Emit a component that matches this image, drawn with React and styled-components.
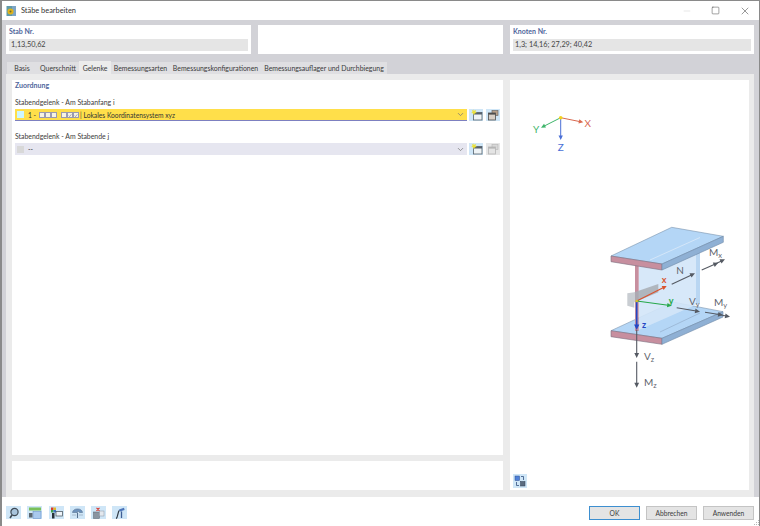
import React from 'react';
import styled, { createGlobalStyle } from 'styled-components';
import { Minus, Square, X, ChevronDown } from 'lucide-react';

const GlobalStyle = createGlobalStyle`
  html, body { margin: 0; padding: 0; background: #fff; }
  body { font-family: Lato, 'Open Sans', sans-serif; font-size: 7px; color: #3c3c3c; }
`;

const Window = styled.div`
  width: 760px;
  height: 526px;
  box-sizing: border-box;
  border: 1px solid #8a8a8a;
  border-bottom: 0;
  border-left-width: 2px;
  display: flex;
  flex-direction: column;
  overflow: hidden;
  position: relative;
`;

const TitleBar = styled.header`
  height: 19px;
  display: flex;
  align-items: center;
  padding-left: 4px;
  background: #fff;
`;

const TitleText = styled.span`
  margin-left: 4px;
  font-size: 7.4px;
  color: #333;
`;

const WindowButtons = styled.div`
  margin-left: auto;
  display: flex;
  color: #333;
`;

const WindowButton = styled.span`
  width: 29px;
  height: 19px;
  display: flex;
  align-items: center;
  justify-content: center;
  color: ${p => (p.$dim ? '#c4c4c4' : '#333')};
`;

const Body = styled.main`
  height: 477px;
  background: #d2d2d7;
  padding: 5px 5px 0 4px;
  box-sizing: border-box;
  display: flex;
  flex-direction: column;
`;

const InfoRow = styled.section`
  display: grid;
  grid-template-columns: 245px 245px 244px;
  column-gap: 7px;
  height: 29px;
`;

const InfoCard = styled.div`
  background: #fff;
  padding: 1px 3px 0;
  box-sizing: border-box;
`;

const CardTitle = styled.div`
  color: #50669c;
  font-size: 7px;
  font-weight: 700;
  height: 11px;
  line-height: 11px;
`;

const ReadOnly = styled.div`
  margin-top: 2px;
  height: 12px;
  line-height: 12px;
  background: #e5e5e5;
  color: #444;
  font-size: 7.3px;
  padding-left: 2px;
`;

const TabBar = styled.nav`
  display: flex;
  margin-top: 8px;
  height: 12px;
  padding-left: 1px;
`;

const Tab = styled.div`
  height: ${p => (p.$active ? '14px' : '12px')};
  margin-top: ${p => (p.$active ? '-1px' : '0')};
  line-height: ${p => (p.$active ? '15px' : '13px')};
  background: ${p => (p.$active ? '#ececec' : '#dfdfe2')};
  width: ${p => p.$w}px;
  box-sizing: border-box;
  text-align: center;
  font-size: 6.9px;
  color: #3a3a3a;
  white-space: nowrap;
  position: relative;
`;

const TabPanel = styled.section`
  height: 423px;
  background: #ebebeb;
  padding: 6px 5px 7px 6px;
  box-sizing: border-box;
  display: grid;
  grid-template-columns: 491px 239px;
  column-gap: 7px;
`;

const LeftColumn = styled.div`
  display: flex;
  flex-direction: column;
  gap: 6px;
`;

const FormCard = styled.div`
  height: 375px;
  background: #fff;
  padding: 0 3px;
  box-sizing: border-box;
`;

const NoteCard = styled.div`
  height: 29px;
  background: #fff;
`;

const GroupTitle = styled.div`
  color: #50669c;
  font-size: 7px;
  font-weight: 700;
  height: 11px;
  line-height: 11px;
`;

const FieldLabel = styled.div`
  margin-top: ${p => p.$top}px;
  height: 11px;
  line-height: 11px;
  color: #3c3c3c;
  font-size: 6.9px;
`;

const FieldRow = styled.div`
  display: flex;
  align-items: center;
  margin-top: 1px;
  height: 12px;
`;

const Select = styled.div`
  width: 452px;
  height: 12px;
  box-sizing: border-box;
  display: flex;
  align-items: center;
  padding-left: 2px;
  background: ${p => (p.$highlight ? '#ffdf4a' : '#e6e6f0')};
  border-bottom: ${p => (p.$highlight ? '1px solid #7d80c0' : '0')};
  font-size: 6.7px;
  color: #333;
`;

const Swatch = styled.span`
  width: 7px;
  height: 7px;
  margin-right: 4px;
  background: ${p => (p.$muted ? '#d8d8d8' : '#cdf6ff')};
`;

const Flag = styled.span`
  width: 6px;
  height: 6px;
  border: 0.6px solid #9a9ab0;
  box-sizing: border-box;
  background: #f6f3e2;
  display: flex;
`;

const Flags = styled.span`
  display: inline-flex;
  margin: ${p => (p.$first ? '0 4px 0 3px' : '0 1px 0 0')};
`;

const Caret = styled.span`
  margin-left: auto;
  margin-right: 2px;
  display: flex;
  color: #777;
`;

const SelectButton = styled.span`
  width: 14px;
  height: 12px;
  margin-left: ${p => p.$gap}px;
  background: ${p => (p.$off ? '#e6e6e6' : '#cfe6f7')};
  display: flex;
  align-items: center;
  justify-content: center;
`;

const ViewCard = styled.div`
  background: #fff;
  position: relative;
`;

const Scene = styled.svg`
  display: block;
  width: 239px;
  height: 410px;
`;

const ViewToggle = styled.span`
  position: absolute;
  left: 3px;
  bottom: 2px;
  width: 14px;
  height: 14px;
  background: #cfe6f7;
  display: flex;
  align-items: center;
  justify-content: center;
`;

const Footer = styled.footer`
  flex: 1;
  background: #fff;
  display: flex;
  align-items: flex-start;
  padding: 9px 0 0 4px;
`;

const Tool = styled.span`
  width: 15px;
  height: 13px;
  margin-right: 6.3px;
  background: #cfe6f7;
  display: flex;
  align-items: center;
  justify-content: center;
`;

const Actions = styled.div`
  margin-left: auto;
  margin-right: 5px;
  display: flex;
  gap: 6px;
`;

const Action = styled.button`
  width: 51px;
  height: 14px;
  padding: 0;
  margin: 0;
  box-sizing: border-box;
  background: #e4e4e4;
  border: ${p => (p.$primary ? '1px solid #3d8fd0' : '1px solid #c4c4c4')};
  font: 6.7px Lato, 'Open Sans', sans-serif;
  color: #3c3c3c;
`;

const Grip = styled.svg`
  position: absolute;
  right: 0;
  bottom: 1px;
  width: 6px;
  height: 6px;
`;

const tabs = [
  ['Basis', 30],
  ['Querschnitt', 42],
  ['Gelenke', 32],
  ['Bemessungsarten', 59],
  ['Bemessungskonfigurationen', 91],
  ['Bemessungsauflager und Durchbiegung', 126],
];

const AppIcon = () => (
  <svg width="11" height="12" viewBox="0 0 11 12">
    <rect x="0.5" y="1" width="9" height="10" fill="#5f9aa8" />
    <rect x="6" y="1" width="4" height="10" fill="#7ea5c4" />
    <circle cx="4.5" cy="6.5" r="3" fill="#e1b419" />
    <circle cx="4.5" cy="6.5" r="1" fill="#6d6a2a" />
  </svg>
);

const Check = () => (
  <svg width="5" height="5" viewBox="0 0 5 5">
    <path d="M0.8 2.6L2 3.8 4.2 1" fill="none" stroke="#6a6a84" strokeWidth="0.7" />
  </svg>
);

const NewIcon = () => (
  <svg width="13" height="12" viewBox="0 0 13 12">
    <rect x="3.5" y="3.5" width="8.5" height="7.5" fill="#eef3f6" stroke="#56616c" strokeWidth="0.8" />
    <rect x="3.5" y="3.5" width="8.5" height="2" fill="#56616c" />
    <path d="M3.5 0l.8 1.8L6.2 1 5.4 2.9 7 4 5 4.2 3.5 6 3 4.2 1 4l1.6-1.1L1.8 1l1.9.8z" fill="#ece23a" />
  </svg>
);

const CopyIcon = ({ off }) => (
  <svg width="12" height="11" viewBox="0 0 12 11">
    <rect x="5" y="0.5" width="6" height="5" fill={off ? '#d8d8d8' : '#b8a08a'} stroke={off ? '#bbb' : '#6a6a6a'} strokeWidth="0.7" />
    <rect x="1.5" y="3" width="7" height="7" fill={off ? '#e4e4e4' : '#d8cfc6'} stroke={off ? '#b5b5b5' : '#4d4d4d'} strokeWidth="0.8" />
    <rect x="1.5" y="3" width="7" height="1.6" fill={off ? '#b5b5b5' : '#4d4d4d'} />
  </svg>
);

const ToggleIcon = () => (
  <svg width="12" height="12" viewBox="0 0 12 12">
    <rect x="1" y="1" width="4.5" height="4.5" fill="#4f80d8" stroke="#2f4f90" strokeWidth="0.5" />
    <rect x="6.5" y="6.5" width="4.5" height="4.5" fill="#5c6c80" stroke="#2f3f55" strokeWidth="0.5" />
    <path d="M7 1.5h2.5V5M5 10.5H2.5V7" fill="none" stroke="#34507f" strokeWidth="0.8" />
  </svg>
);

const toolIcons = [
  <svg key="a" width="12" height="12" viewBox="0 0 12 12">
    <circle cx="6.5" cy="5" r="3.6" fill="#a8c4dc" stroke="#3f4a55" strokeWidth="1.2" />
    <path d="M4 8L2 11" stroke="#3f4a55" strokeWidth="1.6" />
  </svg>,
  <svg key="b" width="14" height="12" viewBox="0 0 14 12">
    <rect x="1" y="0.5" width="12" height="3" fill="#79c05a" />
    <rect x="5" y="4.5" width="8" height="7" fill="#a9c9ee" stroke="#5f88c4" strokeWidth="0.5" />
    <rect x="1" y="6" width="3.5" height="4.5" fill="#5b6670" />
  </svg>,
  <svg key="c" width="13" height="12" viewBox="0 0 13 12">
    <rect x="1" y="0.5" width="2.5" height="2.5" fill="#d43b2f" />
    <rect x="3.5" y="0.5" width="2.5" height="2.5" fill="#e0b92a" />
    <rect x="1" y="3" width="2.5" height="2.5" fill="#3da04a" />
    <rect x="3.5" y="3" width="2.5" height="2.5" fill="#3b6fc4" />
    <rect x="6" y="4.5" width="6.5" height="4.5" fill="#eef4fa" stroke="#3f4a55" strokeWidth="0.7" />
    <rect x="2" y="6" width="2.5" height="5.5" fill="#27303a" />
  </svg>,
  <svg key="d" width="13" height="12" viewBox="0 0 13 12">
    <path d="M1.5 5.5A5 3.6 0 0 1 11.5 5.5H8.5L7.2 4 6 5.5H1.5z" fill="#6d93bd" stroke="#4a6484" strokeWidth="0.5" />
    <path d="M6.5 5.5V11" stroke="#54708f" strokeWidth="1.1" />
    <path d="M1 8h4M8 8h4" stroke="#a6bacd" strokeWidth="1" />
  </svg>,
  <svg key="e" width="13" height="12" viewBox="0 0 13 12">
    <path d="M4.5 0.8l3 3M7.5 0.8l-3 3" stroke="#d8372b" strokeWidth="1.1" />
    <rect x="1.5" y="5" width="6" height="6.5" fill="#8a94a0" stroke="#59626d" strokeWidth="0.5" />
    <rect x="7.5" y="4" width="4.5" height="5" fill="#e3e8ee" stroke="#8894a2" strokeWidth="0.5" />
  </svg>,
  <svg key="f" width="13" height="12" viewBox="0 0 13 12">
    <path d="M3 11.5C5 11 4.5 4.5 6.5 3.2" fill="none" stroke="#2f3944" strokeWidth="1.2" />
    <path d="M6 2.6L11 0.8 11.6 3 7 4.4z" fill="#4c74b8" />
    <path d="M8.5 4.4V11" stroke="#3f5f95" strokeWidth="1.3" />
  </svg>,
];

const Arrow = ({ x1, y1, x2, y2, color, width = 1, size = 4 }) => {
  const a = Math.atan2(y2 - y1, x2 - x1);
  const p = (r, d) => `${x2 - Math.cos(a + r) * d},${y2 - Math.sin(a + r) * d}`;
  return (
    <g>
      <line x1={x1} y1={y1} x2={x2 - Math.cos(a) * size * 0.7} y2={y2 - Math.sin(a) * size * 0.7} stroke={color} strokeWidth={width} />
      <polygon points={`${x2},${y2} ${p(0.45, size)} ${p(-0.45, size)}`} fill={color} />
    </g>
  );
};

const Label = styled.text`
  font-family: Lato, 'Open Sans', sans-serif;
  font-size: ${p => p.$size || 10}px;
  font-weight: ${p => p.$weight || 400};
  fill: ${p => p.$color || '#5f646d'};
  text-anchor: ${p => p.$anchor || 'start'};
`;

const SubLabel = ({ x, y, main, sub }) => (
  <Label x={x} y={y} $size={10}>
    {main}
    <tspan fontSize="7.5" dy="2">{sub}</tspan>
  </Label>
);

// coordinates are page position minus the panel origin (510, 80)
const SceneDrawing = () => (
  <Scene viewBox="0 0 239 410">
    <Arrow x1={50.7} y1={37.7} x2={73.3} y2={42.3} color="#d9694f" size={5} />
    <Arrow x1={50.7} y1={37.7} x2={31} y2={47.7} color="#3fb56b" size={5} />
    <Arrow x1={50.7} y1={37.7} x2={50.7} y2={60} color="#4a6fd6" size={5} />
    <circle cx="50.7" cy="37.7" r="1.8" fill="#f2d21c" />
    <Label x="77.7" y="46.5" $size={10} $anchor="middle" $color="#d9694f">X</Label>
    <Label x="26" y="53" $size={10} $anchor="middle" $color="#3fb56b">Y</Label>
    <Label x="50.7" y="71" $size={10} $anchor="middle" $color="#4a6fd6">Z</Label>

    {/* bottom flange */}
    <polygon points="101,250.7 163,222 213,231.7 152,258.3" fill="#b4d6f6" stroke="#7c93ad" strokeWidth="0.6" />
    <polygon points="101,250.7 152,258.3 152,264.3 101,256.7" fill="#c78f9f" stroke="#7b6f80" strokeWidth="0.6" />
    <polygon points="152,258.3 213,231.7 213,237 152,264.3" fill="#8fb0d4" stroke="#6f8aa8" strokeWidth="0.6" />
    {/* web */}
    <polygon points="128.7,186.7 190,157.7 190,223 128.7,250" fill="#d3e6f8" opacity="0.9" />
    <polygon points="186,159.5 190,157.7 190,223 186,225" fill="#b9d6f2" />
    <rect x="125" y="185" width="3.7" height="66" fill="#c78f9f" />
    {/* top flange */}
    <polygon points="101,176 161.7,147.3 213.3,156.3 152,184" fill="#b4d6f6" stroke="#7c93ad" strokeWidth="0.6" />
    <polygon points="101,176 152,184 152,190 101,181.7" fill="#c78f9f" stroke="#7b6f80" strokeWidth="0.6" />
    <polygon points="152,184 213.3,156.3 213.3,162.3 152,190" fill="#8fb0d4" stroke="#6f8aa8" strokeWidth="0.6" />
    <line x1="140" y1="180" x2="190" y2="157.5" stroke="#d4e6f8" strokeWidth="1" />
    <line x1="150" y1="252" x2="190" y2="233" stroke="#8ea8c4" strokeWidth="0.6" />
    {/* plate on the web */}
    <polygon points="124.3,212.3 148.3,204 148.3,212.3 124.3,222.3" fill="#a8adb4" opacity="0.85" />
    <polygon points="117.3,213.3 124.3,212.3 124.3,227.7 117.3,225.7" fill="#c9cdd2" />
    {/* forces */}
    <Arrow x1={126.7} y1={250} x2={126.7} y2={278} color="#555a63" width={1.1} size={5.5} />
    <Arrow x1={126.7} y1={281.7} x2={126.7} y2={307.7} color="#555a63" width={1.1} size={5.5} />
    <Arrow x1={161.7} y1={204.3} x2={185} y2={193.3} color="#555a63" width={1.1} size={5.5} />
    <Arrow x1={191.7} y1={190} x2={208.3} y2={182.7} color="#555a63" width={1.1} size={5.5} />
    <Arrow x1={204} y1={184.5} x2={215} y2={179.3} color="#555a63" width={1.1} size={5.5} />
    <Arrow x1={166.7} y1={227.7} x2={190} y2={231.7} color="#555a63" width={1.1} size={5.5} />
    <Arrow x1={195} y1={232.3} x2={213} y2={235} color="#555a63" width={1.1} size={5.5} />
    <Arrow x1={208} y1={234.5} x2={220} y2={236.7} color="#555a63" width={1.1} size={5.5} />
    {/* local axes */}
    <Arrow x1={126.7} y1={221} x2={156.7} y2={206} color="#d9532f" width={1.2} size={5} />
    <Arrow x1={126.7} y1={221} x2={161.7} y2={225.7} color="#27a84a" width={1.2} size={5} />
    <Arrow x1={126.7} y1={221} x2={126.7} y2={250} color="#2447c4" width={1.6} size={6} />
    <circle cx="126.7" cy="221" r="1.3" fill="#d8c12a" />
    <Label x="154" y="203" $size={9} $weight={700} $anchor="middle" $color="#d9532f">x</Label>
    <Label x="161" y="224" $size={9} $weight={700} $anchor="middle" $color="#27a84a">y</Label>
    <Label x="134" y="248" $size={9} $weight={700} $anchor="middle" $color="#2447c4">z</Label>
    <Label x="170" y="194" $size={10} $anchor="middle">N</Label>
    <SubLabel x={199} y={176} main="M" sub="x" />
    <SubLabel x={179} y={225} main="V" sub="y" />
    <SubLabel x={204} y={226} main="M" sub="y" />
    <SubLabel x={134} y={280} main="V" sub="z" />
    <SubLabel x={134} y={306} main="M" sub="z" />
  </Scene>
);

export default function App() {
  return (
    <Window>
      <GlobalStyle />
      <TitleBar>
        <AppIcon />
        <TitleText>Stäbe bearbeiten</TitleText>
        <WindowButtons>
          <WindowButton $dim><Minus size={10} strokeWidth={1} /></WindowButton>
          <WindowButton><Square size={9} strokeWidth={1.2} /></WindowButton>
          <WindowButton><X size={12} strokeWidth={1} /></WindowButton>
        </WindowButtons>
      </TitleBar>
      <Body>
        <InfoRow>
          <InfoCard>
            <CardTitle>Stab Nr.</CardTitle>
            <ReadOnly>1,13,50,62</ReadOnly>
          </InfoCard>
          <InfoCard />
          <InfoCard>
            <CardTitle>Knoten Nr.</CardTitle>
            <ReadOnly>1,3; 14,16; 27,29; 40,42</ReadOnly>
          </InfoCard>
        </InfoRow>
        <TabBar>
          {tabs.map(([name, w]) => (
            <Tab key={name} $w={w} $active={name === 'Gelenke'}>{name}</Tab>
          ))}
        </TabBar>
        <TabPanel>
          <LeftColumn>
            <FormCard>
              <GroupTitle>Zuordnung</GroupTitle>
              <FieldLabel $top={6}>Stabendgelenk - Am Stabanfang i</FieldLabel>
              <FieldRow>
                <Select $highlight>
                  <Swatch />
                  1 -
                  <Flags $first><Flag /><Flag /><Flag /></Flags>
                  <Flags><Flag /><Flag><Check /></Flag><Flag><Check /></Flag></Flags>
                  | Lokales Koordinatensystem xyz
                  <Caret><ChevronDown size={9} /></Caret>
                </Select>
                <SelectButton $gap={2}><NewIcon /></SelectButton>
                <SelectButton $gap={3}><CopyIcon /></SelectButton>
              </FieldRow>
              <FieldLabel $top={10}>Stabendgelenk - Am Stabende j</FieldLabel>
              <FieldRow>
                <Select>
                  <Swatch $muted />
                  --
                  <Caret><ChevronDown size={9} /></Caret>
                </Select>
                <SelectButton $gap={2}><NewIcon /></SelectButton>
                <SelectButton $gap={3} $off><CopyIcon off /></SelectButton>
              </FieldRow>
            </FormCard>
            <NoteCard />
          </LeftColumn>
          <ViewCard>
            <SceneDrawing />
            <ViewToggle><ToggleIcon /></ViewToggle>
          </ViewCard>
        </TabPanel>
      </Body>
      <Footer>
        {toolIcons.map(icon => <Tool key={icon.key}>{icon}</Tool>)}
        <Actions>
          <Action $primary>OK</Action>
          <Action>Abbrechen</Action>
          <Action>Anwenden</Action>
        </Actions>
      </Footer>
      <Grip viewBox="0 0 6 6">
        <path d="M5 1h1v1H5zM3 3h1v1H3zM5 3h1v1H5zM1 5h1v1H1zM3 5h1v1H3zM5 5h1v1H5z" fill="#b8b8b8" />
      </Grip>
    </Window>
  );
}
